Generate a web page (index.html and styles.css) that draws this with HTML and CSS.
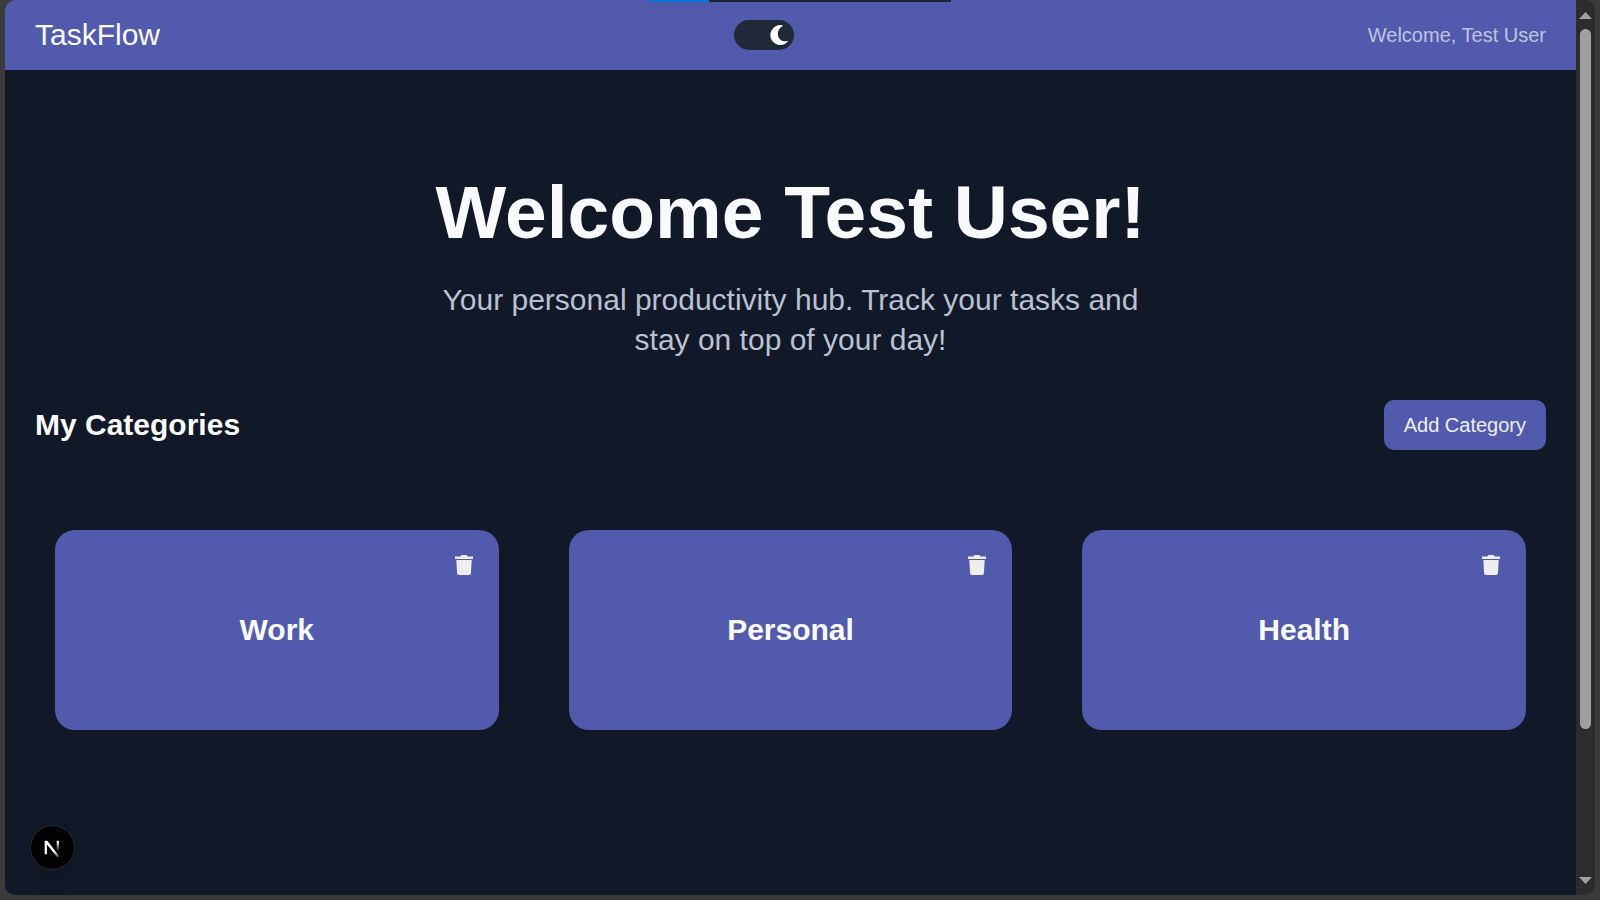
FILE: index.html
```html
<!DOCTYPE html>
<html lang="en">
<head>
<meta charset="utf-8">
<title>TaskFlow</title>
<link rel="stylesheet" href="styles.css">
</head>
<body>
<svg class="defs" aria-hidden="true">
  <symbol id="trash" viewBox="0 0 20 20">
    <path d="M1 1.5H6.3L7.2.3Q7.400 0 7.800 0H12.200Q12.600 0 12.800.3L13.700 1.500H19V3.900H1ZM2.300 5H17.700L16.900 18.300Q16.700 20 15.100 20H4.900Q3.300 20 3.100 18.300Z" fill="#eeeef0"/>
  </symbol>
</svg>
<div class="window">
  <div class="page">
    <header class="navbar">
      <a class="brand" href="#">TaskFlow</a>
      <label class="toggle">
        <input class="toggle-input" type="checkbox" checked aria-label="Dark mode">
        <svg class="moon" viewBox="0 0 20 20" aria-hidden="true"><path d="M13.600.300A10 10 0 1 0 18.900 16.600Q19.100 16 18.200 16.100C8.500 18 5.500 5.500 13.300 1.300Q14.100.700 13.600.300Z" fill="#fff"/></svg>
      </label>
      <span class="greeting">Welcome, Test User</span>
    </header>
    <main class="content">
      <section class="hero">
        <h1 class="hero-title">Welcome Test User!</h1>
        <p class="hero-text">Your personal productivity hub. Track your tasks and stay on top of your day!</p>
      </section>
      <section>
        <div class="section-head">
          <h2 class="section-title">My Categories</h2>
          <button class="add" type="button">Add Category</button>
        </div>
        <div class="cards">
          <article class="card">
            <h3 class="card-title">Work</h3>
            <button class="delete" type="button" aria-label="Delete Work"><svg class="icon"><use href="#trash"/></svg></button>
          </article>
          <article class="card">
            <h3 class="card-title">Personal</h3>
            <button class="delete" type="button" aria-label="Delete Personal"><svg class="icon"><use href="#trash"/></svg></button>
          </article>
          <article class="card">
            <h3 class="card-title">Health</h3>
            <button class="delete" type="button" aria-label="Delete Health"><svg class="icon"><use href="#trash"/></svg></button>
          </article>
        </div>
      </section>
    </main>
    <button class="devtools" type="button" aria-label="Developer tools">
      <svg class="devtools-icon" viewBox="0 0 44 44" aria-hidden="true">
        <defs>
          <linearGradient id="diag" gradientUnits="userSpaceOnUse" x1="22" y1="22" x2="29" y2="32"><stop offset=".3" stop-color="#fff"/><stop offset="1" stop-color="#fff" stop-opacity=".2"/></linearGradient>
          <linearGradient id="stem" x1="0" y1="0" x2="0" y2="1"><stop offset=".1" stop-color="#fff"/><stop offset="1" stop-color="#fff" stop-opacity="0"/></linearGradient>
        </defs>
        <path d="M14 29V15H16.700L29 31L27 32.300L16.300 19V29Z" fill="url(#diag)"/>
        <path d="M26.300 15H28.600V26H26.300Z" fill="url(#stem)"/>
      </svg>
    </button>
  </div>
  <div class="scrollbar" aria-hidden="true">
    <svg class="arrow" viewBox="0 0 13 7"><path d="M0 7L6.500 0L13 7Z" fill="#a0a0a0"/></svg>
    <div class="track"><div class="thumb"></div></div>
    <svg class="arrow" viewBox="0 0 13 7"><path d="M0 0H13L6.500 7Z" fill="#a0a0a0"/></svg>
  </div>
</div>
<div class="loader" aria-hidden="true"></div>
</body>
</html>
```

FILE: styles.css
```css
* {
  box-sizing: border-box;
}

body {
  margin: 0;
  padding: 0 5px 5px;
  height: 100vh;
  background: #3b3b3b;
  color: #f9fafb;
  font: 20px/30px "Liberation Sans", Arial, sans-serif;
}

button {
  border: 0;
  font: inherit;
  color: inherit;
  cursor: pointer;
}

h1,
h2,
h3,
p {
  margin: 0;
}

.defs {
  position: absolute;
  width: 0;
  height: 0;
}

.window {
  display: flex;
  height: 100%;
  border-radius: 10px;
  overflow: hidden;
}

.page {
  position: relative;
  flex: 1;
  overflow: hidden;
  background: #111827;
}

.navbar {
  display: flex;
  align-items: center;
  justify-content: space-between;
  padding: 15px 30px;
  background: #525aae;
}

.brand {
  color: #f9fafb;
  font-size: 30px;
  line-height: 40px;
  text-decoration: none;
}

.toggle {
  display: flex;
  align-items: center;
  justify-content: flex-end;
  width: 60px;
  height: 30px;
  padding: 5px;
  border-radius: 15px;
  background: #1f2937;
  cursor: pointer;
}

.toggle-input {
  position: absolute;
  opacity: 0;
}

.moon,
.icon {
  display: block;
  width: 20px;
  height: 20px;
}

.greeting {
  color: #bfc5de;
}

.content {
  padding: 105px 30px 0;
}

.hero {
  max-width: 720px;
  margin: 0 auto 40px;
  text-align: center;
}

.hero-title {
  margin-bottom: 30px;
  font-size: 75px;
  line-height: 75px;
  white-space: nowrap;
}

.hero-text {
  color: #bac1d2;
  font-size: 30px;
  line-height: 40px;
}

.section-head {
  display: flex;
  align-items: center;
  justify-content: space-between;
}

.section-title,
.card-title {
  font-size: 30px;
  line-height: 40px;
}

.add {
  padding: 10px 20px;
  border-radius: 10px;
  background: #525aae;
  color: #eceef6;
}

.cards {
  display: grid;
  grid-template-columns: repeat(3, 1fr);
  gap: 70px;
  padding: 80px 20px;
}

.card {
  position: relative;
  display: flex;
  align-items: center;
  justify-content: center;
  height: 200px;
  border-radius: 20px;
  background: #525aae;
}

.delete {
  position: absolute;
  top: 25px;
  right: 25px;
  padding: 0;
  background: none;
}

.devtools {
  position: absolute;
  left: 25px;
  bottom: 25px;
  width: 45px;
  height: 45px;
  padding: 0;
  border: 1px solid #2b2b2d;
  border-radius: 50%;
  background: #020204;
  box-shadow: 0 8px 20px rgba(0, 0, 0, 0.1);
}

.devtools-icon {
  display: block;
}

.scrollbar {
  display: flex;
  flex-direction: column;
  align-items: center;
  width: 19px;
  padding: 12px 3px 11px;
  background: #2c2c2c;
}

.arrow {
  flex: none;
  width: 13px;
  height: 7px;
}

.track {
  flex: 1;
  width: 11px;
  padding: 10px 0;
}

.thumb {
  height: 700px;
  max-height: 100%;
  border-radius: 6px;
  background: #a0a0a0;
}

.loader {
  position: absolute;
  top: 0;
  left: 649px;
  width: 302px;
  height: 2px;
  background: linear-gradient(90deg, #0b74d1 20%, #20242e 20%);
}
```
